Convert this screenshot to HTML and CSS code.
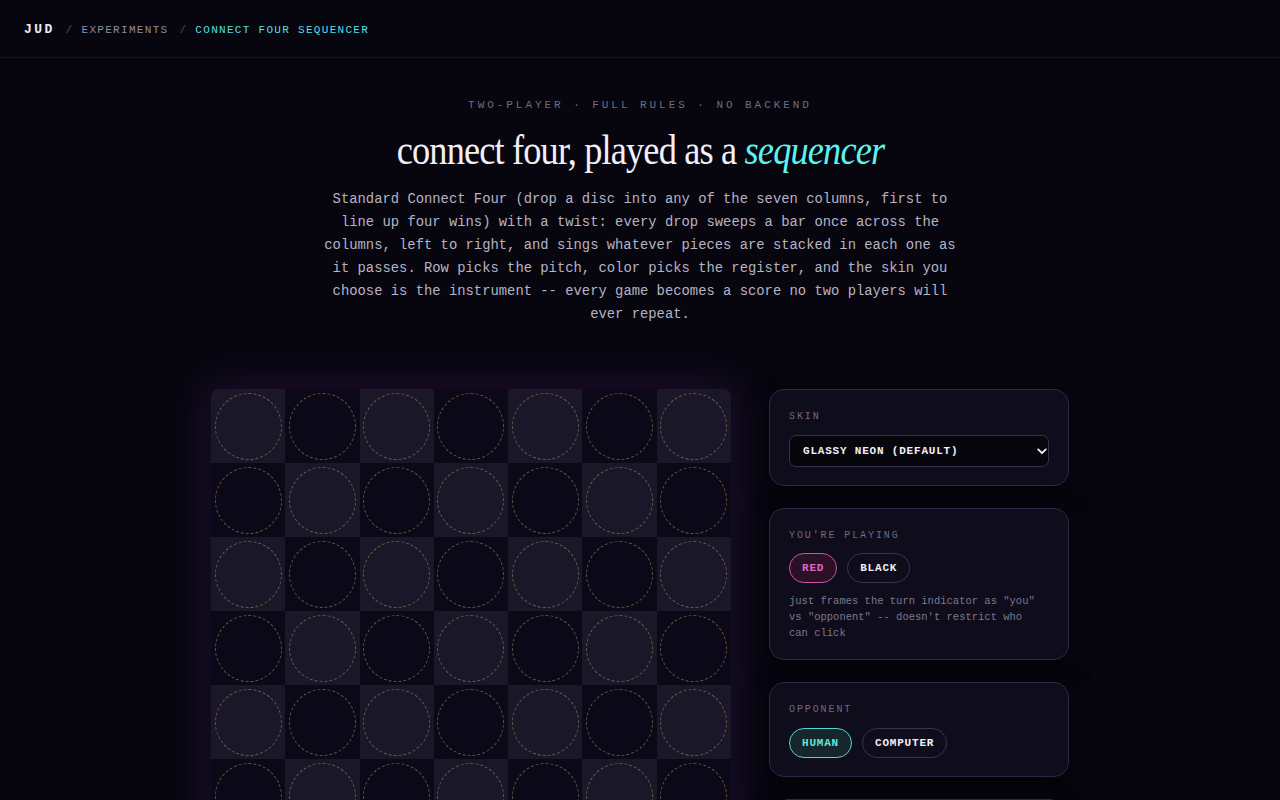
FILE: index.html
```html
<!DOCTYPE html>
<html lang="en">
<head>
<meta charset="utf-8">
<title>Connect Four Sequencer</title>
<link rel="stylesheet" href="styles.css">
</head>
<body>
<header class="topbar">
  <span class="crumb-home">JUD</span>
  <span class="crumb-sep">/</span>
  <span class="crumb">EXPERIMENTS</span>
  <span class="crumb-sep">/</span>
  <span class="crumb-current">CONNECT FOUR SEQUENCER</span>
</header>
<main class="main">
  <section class="hero">
    <p class="eyebrow">TWO-PLAYER · FULL RULES · NO BACKEND</p>
    <h1 class="title"><span class="title-inner">connect four, played as a <em>sequencer</em></span></h1>
    <p class="lede">Standard Connect Four (drop a disc into any of the seven columns, first to line up four wins) with a twist: every drop sweeps a bar once across the columns, left to right, and sings whatever pieces are stacked in each one as it passes. Row picks the pitch, color picks the register, and the skin you choose is the instrument -- every game becomes a score no two players will ever repeat.</p>
  </section>
  <section class="play">
    <div class="board" id="board"></div>
    <aside class="panel">
      <div class="card">
        <div class="label">SKIN</div>
        <div class="select-wrap">
          <select class="select"><option>GLASSY NEON (DEFAULT)</option></select>
          <svg class="chev" width="12" height="8" viewBox="0 0 12 8"><path d="M1.5 1.5 L6 6 L10.5 1.5" fill="none" stroke="#f2f0fa" stroke-width="2.2" stroke-linecap="round" stroke-linejoin="round"/></svg>
        </div>
      </div>
      <div class="card">
        <div class="label">YOU'RE PLAYING</div>
        <div class="pills">
          <button class="pill pill-red">RED</button>
          <button class="pill">BLACK</button>
        </div>
        <p class="help">just frames the turn indicator as "you" vs "opponent" -- doesn't restrict who can click</p>
      </div>
      <div class="card">
        <div class="label">OPPONENT</div>
        <div class="pills pills-lower">
          <button class="pill pill-cyan">HUMAN</button>
          <button class="pill">COMPUTER</button>
        </div>
      </div>
      <div class="card card-next"></div>
    </aside>
  </section>
</main>
<script>
  var b = document.getElementById('board');
  for (var r = 0; r < 6; r++) {
    for (var c = 0; c < 7; c++) {
      var cell = document.createElement('div');
      cell.className = 'cell ' + ((r + c) % 2 === 0 ? 'light' : 'dark');
      var slot = document.createElement('div');
      slot.className = 'slot';
      cell.appendChild(slot);
      b.appendChild(cell);
    }
  }
</script>
</body>
</html>
```
FILE: styles.css
```css
* { box-sizing: border-box; }
html, body { margin: 0; padding: 0; }
body {
  background: #07060f;
  color: #e8e6f2;
  font-family: "Liberation Mono", "DejaVu Sans Mono", monospace;
  overflow: hidden;
}
.topbar {
  height: 58px;
  border-bottom: 1px solid #16141f;
  display: flex;
  align-items: center;
  padding: 2px 24px 0;
  font-size: 11px;
  letter-spacing: 1.3px;
}
.crumb-home {
  font-size: 13px;
  letter-spacing: 2.4px;
  color: #ecebf3;
  font-weight: bold;
}
.crumb-sep { color: #4d4a5c; margin: 0 8px 0 11px; }
.crumb { color: #8f8c9c; }
.crumb-current { color: #54dfe0; }
.main { padding-top: 40px; }
.hero { text-align: center; }
.eyebrow {
  margin: 0;
  font-size: 11px;
  line-height: 14px;
  letter-spacing: 2.95px;
  color: #706c82;
}
.title {
  margin: 13px 0 0;
  font-family: "Liberation Serif", "DejaVu Serif", serif;
  font-weight: normal;
  font-size: 43px;
  line-height: 50px;
  color: #f1eff8;
}
.title-inner {
  display: inline-block;
  letter-spacing: -1px;
  transform: scaleX(0.845);
}
.title em { color: #5ef2ee; font-style: italic; }
.lede {
  margin: 13px auto 0;
  width: 650px;
  font-size: 13.85px;
  line-height: 23px;
  color: #b6b3c3;
}
.play {
  margin: 63px auto 0;
  width: 858px;
  display: grid;
  grid-template-columns: 520px 300px;
  column-gap: 38px;
  align-items: start;
}
.board {
  display: grid;
  grid-template-columns: repeat(7, 1fr);
  grid-auto-rows: 74px;
  border-radius: 8px;
  overflow: hidden;
  box-shadow: 0 0 40px 6px rgba(70, 30, 100, 0.35);
  background: #0b0918;
}
.cell {
  display: flex;
  align-items: center;
  justify-content: center;
}
.cell.light { background: #1a1729; }
.cell.dark { background: #0b0818; }
.slot {
  width: 67px;
  height: 67px;
  border-radius: 50%;
  border: 1px dashed rgba(170, 155, 95, 0.55);
}
.panel {
  display: flex;
  flex-direction: column;
  gap: 22px;
}
.card {
  background: #0f0c1c;
  border: 1px solid #2d2748;
  border-radius: 15px;
  padding: 21px 19px 18px;
  box-shadow: 0 6px 24px rgba(0, 0, 0, 0.5);
}
.card-next {
  height: 40px;
  margin: 0 11px;
  border-radius: 8px;
}
.label {
  font-size: 10px;
  line-height: 12px;
  letter-spacing: 1.9px;
  color: #6f6a80;
}
.select-wrap {
  position: relative;
  margin-top: 12px;
}
.select {
  display: block;
  width: 100%;
  height: 32px;
  appearance: none;
  -webkit-appearance: none;
  background: #07060d;
  border: 1px solid #36304a;
  border-radius: 7px;
  color: #f2f0fa;
  font-family: "Liberation Mono", "DejaVu Sans Mono", monospace;
  font-weight: bold;
  font-size: 11px;
  letter-spacing: 0.8px;
  padding: 0 13px;
}
.chev {
  position: absolute;
  right: 2px;
  top: 13px;
  width: 10px;
  height: 7px;
}
.pills {
  display: flex;
  gap: 10px;
  margin-top: 11px;
}
.pills-lower { margin-top: 12px; }
.pill {
  height: 30px;
  padding: 0 12px;
  border-radius: 15px;
  border: 1px solid #3a3549;
  background: transparent;
  color: #f1eff8;
  font-family: "Liberation Mono", "DejaVu Sans Mono", monospace;
  font-weight: bold;
  font-size: 11px;
  letter-spacing: 0.8px;
}
.pill-red {
  border-color: #d54cae;
  color: #e064c4;
  background: #2a1126;
}
.pill-cyan {
  border-color: #4fd6cf;
  color: #5ee6df;
  background: #17262a;
}
.help {
  margin: 10px 0 0;
  padding-right: 12px;
  font-size: 10.5px;
  line-height: 16px;
  color: #7c788e;
}
```
